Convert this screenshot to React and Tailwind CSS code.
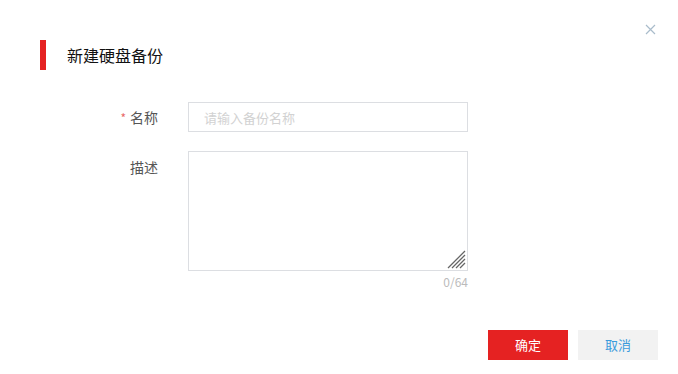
const App = () => {
  return (
    <div
      className="w-[678px] h-[374px] bg-white relative"
      style={{ fontFamily: '"Noto Sans CJK SC", "Noto Sans", sans-serif' }}
    >
      <button className="absolute left-[645px] top-[24px] w-[11px] h-[11px]">
        <svg viewBox="0 0 11 11" width="11" height="11">
          <path d="M1 1L10 10M10 1L1 10" stroke="#a9bccb" strokeWidth="1.2" />
        </svg>
      </button>

      <div className="pt-[40px] pl-[40px] flex items-center h-[70px]">
        <div className="w-[6px] h-[30px] bg-[#e52222]" />
        <h1 className="ml-[21px] text-[16px] text-[#111] leading-[30px]">新建硬盘备份</h1>
      </div>

      <form className="mt-[32px]">
        <div className="flex items-center h-[30px]">
          <label className="w-[158px] text-right text-[14px] text-[#555]">
            <span className="text-[#e86a6a] text-[12px] mr-[4px]">*</span>名称
          </label>
          <input
            type="text"
            placeholder="请输入备份名称"
            className="ml-[30px] w-[280px] h-[30px] border border-[#dcdee2] px-[15px] text-[13px] placeholder-[#d2d2d2] outline-none"
          />
        </div>

        <div className="flex mt-[19px]">
          <label className="w-[158px] text-right text-[14px] text-[#555] pt-[6px]">描述</label>
          <div className="ml-[30px] w-[280px]">
            <div className="relative w-[280px] h-[120px] border border-[#dcdee2]">
              <textarea className="w-full h-full resize-none outline-none p-[8px] text-[13px]" />
              <svg className="absolute right-[1px] bottom-[1px]" width="20" height="20" viewBox="0 0 20 20">
                <path d="M19 2L2 19M19 6L6 19M19 10L10 19M19 14L14 19" stroke="#666" strokeWidth="1.3" />
              </svg>
            </div>
            <div className="text-right text-[12px] text-[#bbb] leading-[20px] mt-[1px]">0/64</div>
          </div>
        </div>
      </form>

      <div className="flex justify-end gap-[10px] pr-[20px] mt-[38px]">
        <button className="w-[80px] h-[30px] bg-[#e52222] text-white text-[13px]">确定</button>
        <button className="w-[80px] h-[30px] bg-[#f2f2f2] text-[#3b9bdc] text-[13px]">取消</button>
      </div>
    </div>
  );
};

export default App;
